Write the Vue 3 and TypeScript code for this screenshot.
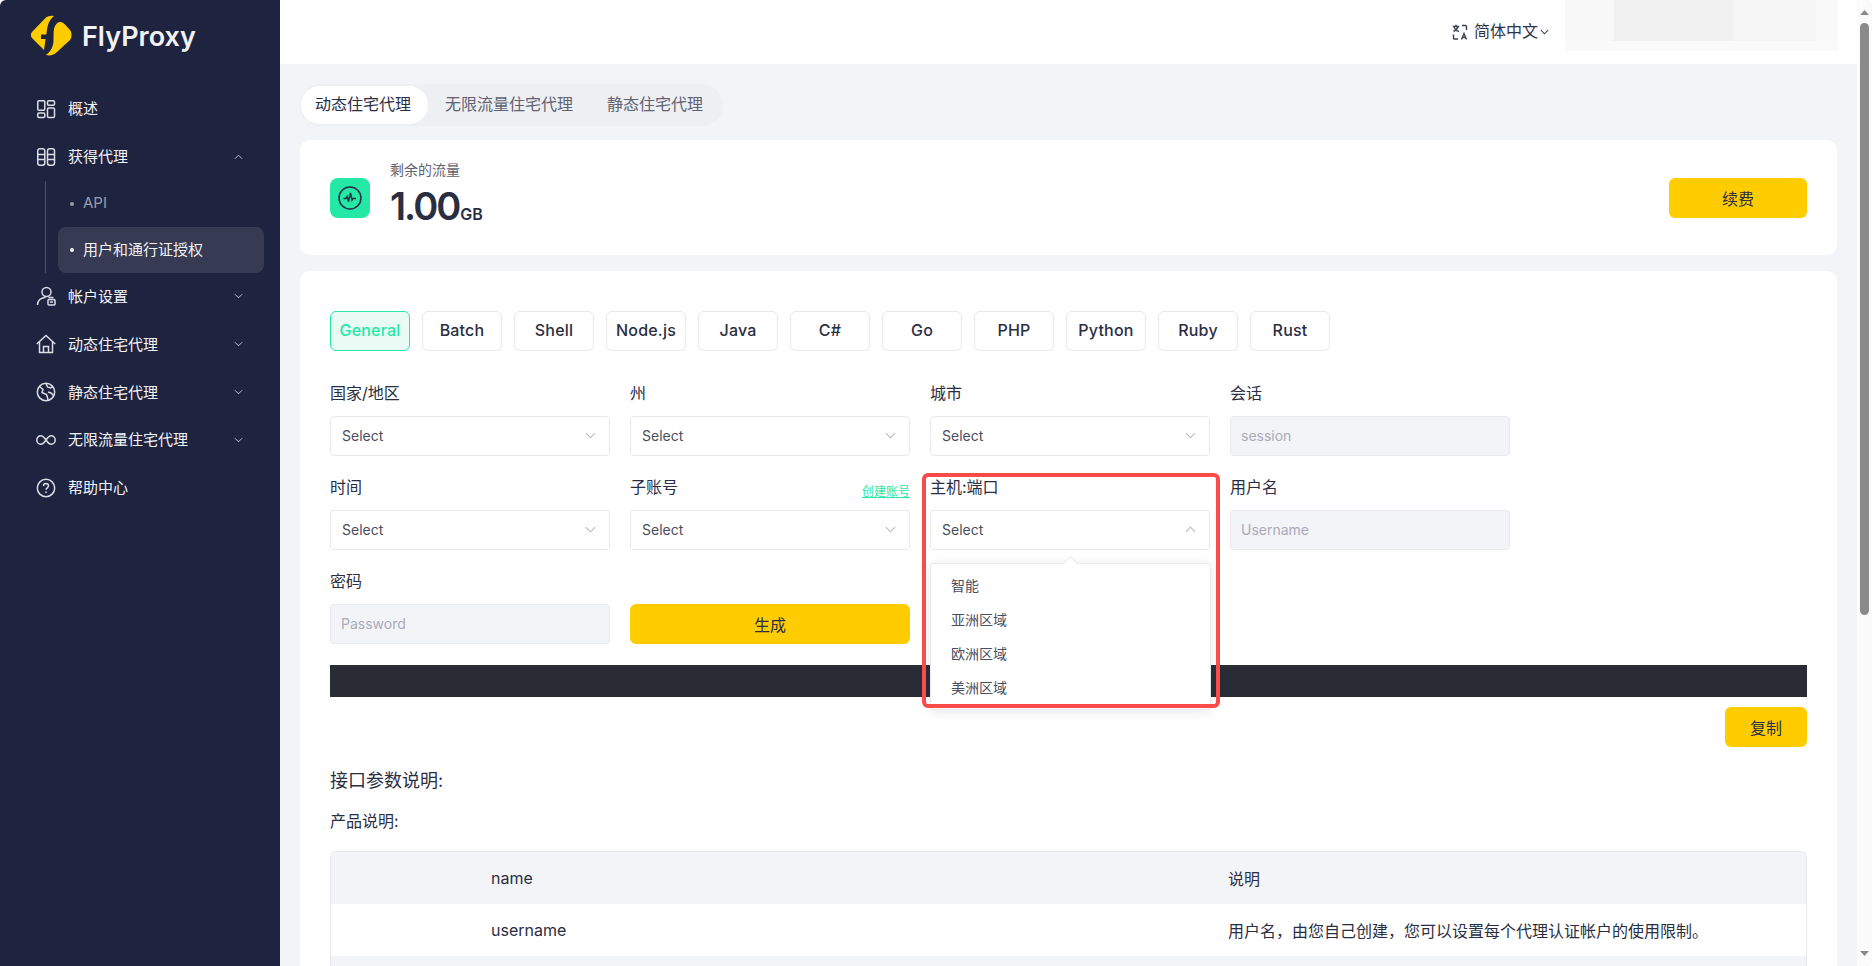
<script setup lang="ts">
import { ref } from 'vue'

interface NavItem {
  label: string
  icon: string
  arrow?: 'up' | 'down'
}

const navTop: NavItem[] = [
  { label: '概述', icon: 'grid' },
  { label: '获得代理', icon: 'columns', arrow: 'up' },
]
const navBottom: NavItem[] = [
  { label: '帐户设置', icon: 'user', arrow: 'down' },
  { label: '动态住宅代理', icon: 'home', arrow: 'down' },
  { label: '静态住宅代理', icon: 'globe', arrow: 'down' },
  { label: '无限流量住宅代理', icon: 'infinity', arrow: 'down' },
  { label: '帮助中心', icon: 'help' },
]
const topTabs = ['动态住宅代理', '无限流量住宅代理', '静态住宅代理']
const langs = ref(['General', 'Batch', 'Shell', 'Node.js', 'Java', 'C#', 'Go', 'PHP', 'Python', 'Ruby', 'Rust'])
const regions = ['智能', '亚洲区域', '欧洲区域', '美洲区域']
</script>

<template>
  <div class="page">
    <aside class="side">
      <div class="logo">
        <svg width="42" height="42" viewBox="0 0 42 42" fill="#ffcc00">
          <path d="M24 1C20 .5 17 1.500 15 3.500L2 17C.5 18.500 .5 21.500 2 23L14 35C14.500 32 15 28 15.500 24H11V19.500H16.500C17 14 17.500 6 24 1Z" />
          <path d="M29 7C32 6.500 33.500 8 35 9.500L40 15C42 17 42 23 40 25L27 37C24 40 20 41 16 40C21 36 23 32 23.500 26C24 20 22 10 29 7Z" />
        </svg>
        <span class="logo-text">FlyProxy</span>
      </div>
      <nav class="nav">
        <div v-for="item in navTop" :key="item.label" class="nav-item">
          <svg class="nav-icon" viewBox="0 0 20 20" fill="none" stroke="currentColor" stroke-width="1.500">
            <template v-if="item.icon === 'grid'">
              <rect x="1.750" y="1.750" width="7" height="9.500" rx="1.200" />
              <rect x="11.500" y="1.750" width="7" height="4.500" rx="1.200" />
              <rect x="1.750" y="14" width="7" height="4.500" rx="1.200" />
              <rect x="11.500" y="9" width="7" height="9.500" rx="1.200" />
            </template>
            <template v-else>
              <rect x="1.750" y="1.750" width="7" height="16.500" rx="2.200" />
              <rect x="11.500" y="1.750" width="7" height="16.500" rx="2.200" />
              <path d="M1.750 7.500h7M1.750 12.500h7M11.500 7.500h7M11.500 12.500h7" />
            </template>
          </svg>
          <span class="nav-label">{{ item.label }}</span>
          <svg v-if="item.arrow" class="nav-arrow" viewBox="0 0 10 6" fill="none" stroke="currentColor" stroke-width="1">
            <path d="M1 5l4-4 4 4" />
          </svg>
        </div>
        <div class="sub">
          <div class="sub-item"><i class="dot"></i><span class="sub-text">API</span></div>
          <div class="sub-item sub-item--on"><i class="dot"></i><span class="sub-text">用户和通行证授权</span></div>
        </div>
        <div v-for="item in navBottom" :key="item.label" class="nav-item">
          <svg class="nav-icon" viewBox="0 0 20 20" fill="none" stroke="currentColor" stroke-width="1.500">
            <template v-if="item.icon === 'user'">
              <circle cx="10.500" cy="6" r="4.500" />
              <path d="M1.500 19c0-4.500 3.500-7.500 8-7.500" />
              <rect x="12" y="13.500" width="7" height="5.500" rx="1" />
              <path d="M12.500 11.500h5M14 16h3" />
            </template>
            <template v-else-if="item.icon === 'home'">
              <path d="M.8 10L10 1.500 19.200 10" />
              <path d="M3.500 8v10.500h13V8" />
              <path d="M7.500 18.500v-6h5v6" />
            </template>
            <template v-else-if="item.icon === 'globe'">
              <circle cx="10" cy="10" r="8.700" />
              <path d="M3.500 4.500l3.500 3-1 3 4.500 2 1 3 .5 3M10 1.500l1.500 3.500 3 1 2.500-1.500M12 10l3 1 2.500 2.500" />
            </template>
            <template v-else-if="item.icon === 'infinity'">
              <path d="M10 10C8 7 6.500 5.700 4.800 5.700 2.600 5.700.8 7.600.8 10s1.800 4.300 4 4.300c1.700 0 3.200-1.300 5.200-4.300 2-3 3.500-4.300 5.200-4.300 2.200 0 4 1.900 4 4.300s-1.800 4.300-4 4.300c-1.700 0-3.200-1.300-5.200-4.300z" />
            </template>
            <template v-else>
              <circle cx="10" cy="10" r="8.700" />
              <path d="M7.500 8c0-1.500 1.100-2.500 2.500-2.500s2.500 1 2.500 2.300c0 2-2.500 2-2.500 4" />
              <path d="M10 13.500v1.500" />
            </template>
          </svg>
          <span class="nav-label">{{ item.label }}</span>
          <svg v-if="item.arrow" class="nav-arrow" viewBox="0 0 10 6" fill="none" stroke="currentColor" stroke-width="1">
            <path d="M1 1l4 4 4-4" />
          </svg>
        </div>
      </nav>
    </aside>

    <div class="main">
      <header class="top">
        <svg class="lang-icon" viewBox="0 0 16 16" fill="none" stroke="#3b3f52" stroke-width="1.400">
          <path d="M.8 2.500h6.400M4 .8v1.700M6 2.500C5.500 5 3.500 6.500 1.500 7.500M2 3.500C3 5.500 5 7 7 7.500" />
          <path d="M10 1.500h3.500a1 1 0 0 1 1 1V6M6 15H2.500a1 1 0 0 1-1-1V10.500" />
          <path d="M9.500 15.500l2.500-6 2.500 6M10.500 13.500h3" />
        </svg>
        <span class="lang-text">简体中文</span>
        <svg class="lang-arrow" viewBox="0 0 10 6" fill="none" stroke="#3b3f52" stroke-width="1.200"><path d="M1 1l4 4 4-4" /></svg>
        <div class="blur-box"><div class="blur-inner"></div></div>
      </header>

      <div class="content">
        <div class="pills">
          <span v-for="(t, i) in topTabs" :key="t" class="pill" :class="{ 'pill--on': i === 0 }">{{ t }}</span>
        </div>

        <section class="card traffic">
          <div class="traffic-icon">
            <svg width="24" height="24" viewBox="0 0 24 24" fill="none" stroke="#2a2e42" stroke-width="1.500">
              <circle cx="12" cy="12" r="11" />
              <path d="M5.500 12.500H8l1.200-2 1.300 5 2-8.500 1.500 7 1-1.500h3" />
            </svg>
          </div>
          <div class="traffic-info">
            <div class="traffic-label">剩余的流量</div>
            <div class="traffic-num">1.00<small>GB</small></div>
          </div>
          <button class="btn btn--renew">续费</button>
        </section>

        <section class="card body">
          <div class="langs">
            <span v-for="(l, i) in langs" :key="l" class="lang" :class="{ 'lang--on': i === 0 }">{{ l }}</span>
          </div>

          <div class="form">
            <div class="field">
              <div class="label">国家/地区</div>
              <div class="select">Select<svg class="chev" viewBox="0 0 12 7"><path d="M1 1l5 5 5-5" /></svg></div>
            </div>
            <div class="field">
              <div class="label">州</div>
              <div class="select">Select<svg class="chev" viewBox="0 0 12 7"><path d="M1 1l5 5 5-5" /></svg></div>
            </div>
            <div class="field">
              <div class="label">城市</div>
              <div class="select">Select<svg class="chev" viewBox="0 0 12 7"><path d="M1 1l5 5 5-5" /></svg></div>
            </div>
            <div class="field">
              <div class="label">会话</div>
              <div class="input">session</div>
            </div>

            <div class="field">
              <div class="label">时间</div>
              <div class="select">Select<svg class="chev" viewBox="0 0 12 7"><path d="M1 1l5 5 5-5" /></svg></div>
            </div>
            <div class="field">
              <div class="label">子账号<a class="link">创建账号</a></div>
              <div class="select">Select<svg class="chev" viewBox="0 0 12 7"><path d="M1 1l5 5 5-5" /></svg></div>
            </div>
            <div class="field field--open">
              <div class="label">主机:端口</div>
              <div class="select">Select<svg class="chev" viewBox="0 0 12 7"><path d="M1 6l5-5 5 5" /></svg></div>
              <div class="menu">
                <div v-for="r in regions" :key="r" class="menu-item">{{ r }}</div>
              </div>
              <div class="mark"></div>
            </div>
            <div class="field">
              <div class="label">用户名</div>
              <div class="input">Username</div>
            </div>

            <div class="field">
              <div class="label">密码</div>
              <div class="input">Password</div>
            </div>
            <div class="field field--btn">
              <button class="btn btn--gen">生成</button>
            </div>
          </div>

          <div class="code-bar"></div>
          <div class="copy-row"><button class="btn btn--copy">复制</button></div>

          <h3 class="h-api">接口参数说明:</h3>
          <div class="h-prod">产品说明:</div>

          <div class="table">
            <div class="tr tr--grey">
              <div class="td-name">name</div>
              <div class="td-desc">说明</div>
            </div>
            <div class="tr">
              <div class="td-name">username</div>
              <div class="td-desc">用户名，由您自己创建，您可以设置每个代理认证帐户的使用限制。</div>
            </div>
            <div class="tr tr--grey"></div>
          </div>
        </section>
      </div>
    </div>

    <div class="scrollbar">
      <svg class="sb-arrow" viewBox="0 0 9 5"><path d="M4.500 0L9 5H0z" fill="#8a8a8a" /></svg>
      <div class="sb-thumb"></div>
      <svg class="sb-arrow sb-arrow--down" viewBox="0 0 9 5"><path d="M4.500 5L9 0H0z" fill="#8a8a8a" /></svg>
    </div>
  </div>
</template>

<style>
html, body { margin: 0; overflow: hidden; background: #fff; }
</style>

<style scoped>
.page {
  display: flex;
  width: 1872px;
  height: 966px;
  overflow: hidden;
  border-radius: 6px 6px 6px 0;
  background: #f3f4f8;
  font-family: Inter, "Noto Sans CJK SC", sans-serif;
  color: #2a2e42;
}

.side {
  width: 280px;
  flex-shrink: 0;
  background: #1e2340;
  color: #f2f3f6;
}
.logo {
  display: flex;
  align-items: center;
  gap: 10px;
  height: 72px;
  padding-left: 30px;
}
.logo-text {
  font-size: 27px;
  font-weight: 600;
  color: #f2f2f2;
}
.nav {
  padding-top: 13px;
}
.nav-item {
  display: flex;
  align-items: center;
  height: 47.800px;
  padding-left: 36px;
  font-size: 15px;
}
.nav-icon {
  width: 20px;
  height: 20px;
  margin-right: 12px;
  color: #dcdee6;
}
.nav-label {
  flex: 1;
  margin-top: -2px;
}
.nav-arrow {
  width: 9px;
  height: 6px;
  margin-right: 37px;
  color: #c8cad4;
}
.sub {
  margin-left: 45px;
  padding-right: 16px;
  border-left: 1px solid #4b4f68;
  padding-left: 12px;
}
.sub-item {
  display: flex;
  align-items: center;
  height: 46px;
  padding-left: 12px;
  font-size: 15px;
  color: #9a9cab;
  border-radius: 8px;
}
.sub-text {
  margin-top: -2px;
}
.sub-item--on {
  background: #363a52;
  color: #f2f3f6;
}
.dot {
  width: 4px;
  height: 4px;
  border-radius: 50%;
  background: currentColor;
  margin-right: 9px;
}

.main {
  flex: 1;
  min-width: 0;
}
.top {
  display: flex;
  align-items: center;
  height: 64px;
  box-sizing: border-box;
  padding-bottom: 1px;
  background: #fff;
  padding-left: 1172px;
  position: relative;
}
.lang-icon {
  width: 16px;
  height: 16px;
  margin-right: 6px;
}
.lang-text {
  font-size: 16px;
  color: #2f3346;
  margin-top: -3px;
}
.lang-arrow {
  width: 9px;
  height: 6px;
  margin-left: 2px;
}
.blur-box {
  position: absolute;
  left: 1285px;
  top: 0;
  width: 273px;
  height: 51px;
  background: #fafafb;
}
.blur-inner {
  height: 41px;
  background: linear-gradient(90deg, #f8f8f8 18%, #f1f1f1 18%, #f1f1f1 62%, #f6f6f6 62%, #f6f6f6 92%, #f9f9f9 92%);
}

.content {
  padding: 20px 20px 0;
}
.pills {
  display: inline-flex;
  align-items: center;
  height: 42px;
  padding: 0 1px;
  border-radius: 21px;
  background: #eeeff3;
  margin-bottom: 14px;
  vertical-align: top;
}
.pill {
  height: 38px;
  line-height: 36px;
  padding: 0 14px;
  margin-right: 6px;
  border-radius: 19px;
  font-size: 16px;
  color: #5e6272;
}
.pill:first-child {
  padding-right: 17px;
  margin-right: 3px;
}
.pill:last-child {
  margin-right: 5px;
}
.pill--on {
  background: #fff;
  color: #2a2e42;
}

.card {
  background: #fff;
  border-radius: 10px;
}
.traffic {
  display: flex;
  align-items: center;
  height: 115px;
  padding: 0 30px;
  margin-bottom: 16px;
}
.traffic-icon {
  display: flex;
  align-items: center;
  justify-content: center;
  width: 40px;
  height: 40px;
  border-radius: 8px;
  background: #24e8a6;
}
.traffic-info {
  flex: 1;
  margin-left: 20px;
}
.traffic-label {
  font-size: 14px;
  line-height: 20px;
  margin-bottom: 5px;
  color: #5e6272;
}
.traffic-num {
  font-size: 38px;
  line-height: 42px;
  font-weight: 600;
  letter-spacing: -2px;
  color: #2a2e42;
}
.traffic-num small {
  font-size: 16px;
  font-weight: 600;
  letter-spacing: 0;
  margin-left: 1px;
}

.btn {
  border: 0;
  border-radius: 6px;
  background: #ffcc00;
  font-family: inherit;
  font-size: 16px;
  color: #2a2e42;
  height: 40px;
  padding: 0;
}
.btn--renew {
  width: 138px;
}
.btn--gen {
  width: 280px;
}
.btn--copy {
  width: 82px;
}

.body {
  padding: 40px 30px 0;
  height: 700px;
}
.langs {
  display: flex;
  gap: 12px;
}
.lang {
  width: 80px;
  height: 40px;
  box-sizing: border-box;
  line-height: 37px;
  text-align: center;
  border: 1px solid #e8e9ed;
  border-radius: 6px;
  font-size: 16px;
  font-weight: 500;
  letter-spacing: .2px;
  color: #2a2e42;
}
.lang--on {
  background: #e9fbf4;
  border-color: #24e8a6;
  color: #24e8a6;
}

.form {
  display: grid;
  grid-template-columns: repeat(4, 280px);
  column-gap: 20px;
  row-gap: 14px;
  margin-top: 25px;
}
.field {
  position: relative;
}
.field--btn {
  align-self: end;
}
.label {
  display: flex;
  justify-content: space-between;
  align-items: flex-start;
  height: 40px;
  line-height: 34px;
  font-size: 16px;
  color: #2a2e42;
}
.link {
  align-self: flex-end;
  font-size: 12px;
  line-height: 16px;
  color: #24e8a6;
  text-decoration: underline;
  margin-bottom: 10px;
}
.select,
.input {
  display: flex;
  align-items: center;
  justify-content: space-between;
  box-sizing: border-box;
  height: 40px;
  padding: 0 11px 1px;
  border: 1px solid #e8e9ed;
  border-radius: 4px;
  font-size: 14px;
  color: #4a4e60;
}
.input {
  padding: 0 10px 1px;
  background: #f3f4f8;
  color: #a9abb6;
}
.chev {
  width: 11px;
  height: 7px;
  margin-right: 2px;
  fill: none;
  stroke: #b4b6be;
  stroke-width: 1.100;
}

.menu {
  position: absolute;
  left: 0;
  top: 93px;
  z-index: 2;
  width: 281px;
  height: 147px;
  box-sizing: border-box;
  padding-top: 5px;
  background: #fff;
  border: 1px solid #e8e9ef;
  border-radius: 4px;
  box-shadow: 0 2px 12px rgba(30, 35, 64, 0.1);
}
.menu::before {
  content: "";
  position: absolute;
  left: 134px;
  top: -6px;
  width: 10px;
  height: 10px;
  background: #fff;
  border-left: 1px solid #e8e9ef;
  border-top: 1px solid #e8e9ef;
  transform: rotate(45deg);
}
.menu-item {
  height: 34px;
  line-height: 34px;
  padding-left: 20px;
  font-size: 14px;
  color: #4a4e60;
}
.mark {
  position: absolute;
  left: -8px;
  top: 3px;
  z-index: 3;
  width: 298px;
  height: 235px;
  box-sizing: border-box;
  border: 4px solid #fa4b4b;
  border-radius: 6px;
}

.code-bar {
  height: 32px;
  margin-top: 21px;
  background: #292c35;
}
.copy-row {
  display: flex;
  justify-content: flex-end;
  margin-top: 10px;
}
.h-api {
  margin: 22px 0 0;
  font-size: 18px;
  line-height: 24px;
  font-weight: 400;
  color: #2a2e42;
}
.h-prod {
  margin-top: 17px;
  font-size: 16px;
  line-height: 22px;
  color: #2a2e42;
}
.table {
  margin-top: 19px;
  border: 1px solid #e8e9ed;
  border-bottom: 0;
  border-radius: 6px 6px 0 0;
  overflow: hidden;
}
.tr {
  display: flex;
  align-items: center;
  height: 52px;
  font-size: 16px;
}
.tr--grey {
  background: #f3f4f8;
}
.td-name {
  width: 897px;
  padding-left: 160px;
  box-sizing: border-box;
}
.td-desc {
  flex: 1;
}

.scrollbar {
  width: 15px;
  flex-shrink: 0;
  background: #fbfbfb;
  display: flex;
  flex-direction: column;
  align-items: center;
}
.sb-arrow {
  width: 9px;
  height: 5px;
  margin-top: 10px;
}
.sb-arrow--down {
  margin-top: auto;
  margin-bottom: 10px;
}
.sb-thumb {
  width: 9px;
  height: 592px;
  margin-top: 8px;
  border-radius: 5px;
  background: #8a8a8a;
}
</style>
